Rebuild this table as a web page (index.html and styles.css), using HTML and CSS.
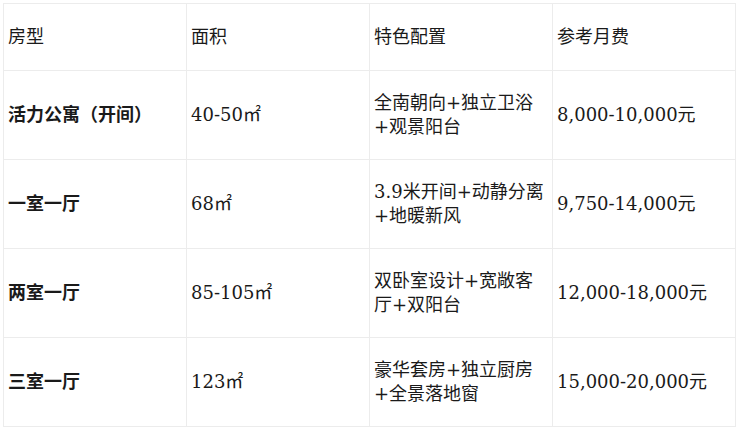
FILE: index.html
```html
<!DOCTYPE html>
<html lang="zh-CN">
<head>
<meta charset="utf-8">
<title>房型</title>
<link rel="stylesheet" href="styles.css">
</head>
<body>
<div class="wrap">
<table class="rooms">
  <colgroup><col class="c"><col class="c"><col class="c"><col class="c"></colgroup>
  <thead>
    <tr><th>房型</th><th>面积</th><th>特色配置</th><th>参考月费</th></tr>
  </thead>
  <tbody>
    <tr><td class="name">活力公寓（开间）</td><td>40-50㎡</td><td>全南朝向+独立卫浴+观景阳台</td><td>8,000-10,000元</td></tr>
    <tr><td class="name">一室一厅</td><td>68㎡</td><td>3.9米开间+动静分离+地暖新风</td><td>9,750-14,000元</td></tr>
    <tr><td class="name">两室一厅</td><td>85-105㎡</td><td>双卧室设计+宽敞客厅+双阳台</td><td>12,000-18,000元</td></tr>
    <tr><td class="name">三室一厅</td><td>123㎡</td><td>豪华套房+独立厨房+全景落地窗</td><td>15,000-20,000元</td></tr>
  </tbody>
</table>
</div>
</body>
</html>
```
FILE: styles.css
```css
html, body { margin: 0; background: #fff; }
.wrap { padding: 3px 4px 3px 3px; }
.rooms {
  width: 100%;
  border-collapse: collapse;
  table-layout: fixed;
  font-family: "DejaVu Serif", "Noto Sans CJK SC", serif;
  font-size: 18px;
  color: #1a1a1a;
}
.rooms .c { width: 25%; }
.rooms th, .rooms td {
  border: 1px solid #ececec;
  padding: 20px 4px;
  line-height: 24px;
  text-align: left;
  vertical-align: middle;
  font-weight: normal;
}
.rooms th { padding: 21px 4px; }
.rooms td.name { font-weight: bold; }
```
